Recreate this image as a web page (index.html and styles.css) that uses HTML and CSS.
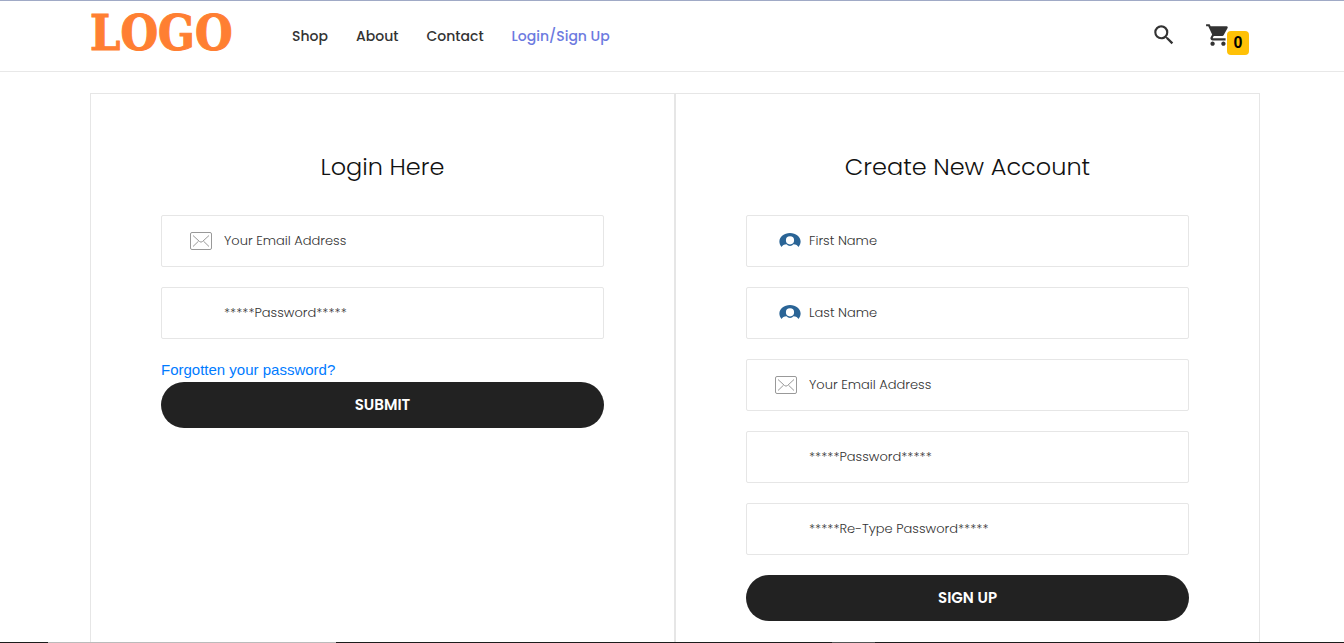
FILE: index.html
```html
<!DOCTYPE html>
<html lang="en">
<head>
<meta charset="utf-8">
<meta name="viewport" content="width=device-width, initial-scale=1">
<title>Login / Sign Up</title>
<link rel="stylesheet" href="styles.css">
</head>
<body>
<svg class="sprite" aria-hidden="true">
  <symbol id="mail" viewBox="0 0 22 18">
    <rect x="0.5" y="0.5" width="21" height="17" rx="1.5" fill="none" stroke="#999"/>
    <path d="M3 3.500l6.500 6q1.500 1.300 3 0l6.500-6M3 14.500l5.500-5.300M19 14.500l-5.500-5.300" fill="none" stroke="#999"/>
  </symbol>
  <symbol id="user" viewBox="0 0 22 16">
    <path fill-rule="evenodd" fill="#2a6496" d="M2.500 15C-3 8 3 1 11 1s14 7 8.500 14c-.8-1.600-2.600-2.500-5-2.700a4.500 4.500 0 0 1-7 0c-2.400.2-4.200 1.100-5 2.700zM11 4.200a4.100 4.100 0 1 0 0 8.200 4.100 4.100 0 0 0 0-8.200z"/>
  </symbol>
</svg>
<header class="header">
  <a class="logo" href="#">LOGO</a>
  <nav class="nav">
    <a href="#">Shop</a>
    <a href="#">About</a>
    <a href="#">Contact</a>
    <a class="active" href="#">Login/Sign Up</a>
  </nav>
  <div class="tools">
    <button class="tool" type="button" aria-label="Search">
      <svg width="26" height="26" viewBox="0 0 24 24"><path fill="#333" d="M15.500 14h-.79l-.28-.27A6.470 6.470 0 0 0 16 9.500 6.500 6.500 0 1 0 9.500 16c1.610 0 3.090-.59 4.230-1.570l.27.28v.79l5 4.990L20.490 19l-4.990-5zm-6 0C7.010 14 5 11.990 5 9.500S7.010 5 9.500 5 14 7.010 14 9.500 11.990 14 9.500 14z"/></svg>
    </button>
    <button class="tool" type="button" aria-label="Cart">
      <svg width="26" height="26" viewBox="0 0 24 24"><path fill="#333" d="M7 18c-1.100 0-1.990.9-1.990 2S5.900 22 7 22s2-.9 2-2-.9-2-2-2zM1 2v2h2l3.600 7.590-1.350 2.450c-.16.28-.25.61-.25.960 0 1.100.9 2 2 2h12v-2H7.420c-.14 0-.25-.11-.25-.25l.03-.12.9-1.630h7.450c.75 0 1.410-.41 1.750-1.030l3.580-6.490A1 1 0 0 0 20 4H5.210l-.94-2H1zm16 16c-1.100 0-1.990.9-1.990 2s.89 2 1.990 2 2-.9 2-2-.9-2-2-2z"/></svg>
      <span class="badge">0</span>
    </button>
  </div>
</header>
<main class="panels">
  <form class="panel">
    <h1 class="title">Login Here</h1>
    <div class="field"><svg class="icon"><use href="#mail"/></svg><input type="email" aria-label="Email" placeholder="Your Email Address"></div>
    <div class="field"><input type="password" aria-label="Password" placeholder="*****Password*****"></div>
    <a class="forgot" href="#">Forgotten your password?</a>
    <button class="submit" type="submit">SUBMIT</button>
  </form>
  <form class="panel">
    <h2 class="title">Create New Account</h2>
    <div class="field"><svg class="icon user"><use href="#user"/></svg><input type="text" aria-label="First name" placeholder="First Name"></div>
    <div class="field"><svg class="icon user"><use href="#user"/></svg><input type="text" aria-label="Last name" placeholder="Last Name"></div>
    <div class="field"><svg class="icon"><use href="#mail"/></svg><input type="email" aria-label="Email" placeholder="Your Email Address"></div>
    <div class="field"><input type="password" aria-label="Password" placeholder="*****Password*****"></div>
    <div class="field"><input type="password" aria-label="Re-type password" placeholder="*****Re-Type Password*****"></div>
    <button class="submit" type="submit">SIGN UP</button>
  </form>
</main>
<div class="edge"></div>
</body>
</html>
```
FILE: styles.css
```css
* { box-sizing: border-box; }
body {
  margin: 0;
  min-height: 100vh;
  display: flex;
  flex-direction: column;
  background: #fff;
  color: #111;
  font-family: Poppins, Inter, sans-serif;
}
a { text-decoration: none; }
.sprite { display: none; }
.header {
  display: flex;
  align-items: center;
  height: 72px;
  padding: 0 84px 0 90px;
  border-top: 1px solid #a0aac6;
  border-bottom: 1px solid #e8e8e8;
}
.logo {
  width: 202px;
  padding-bottom: 6px;
  color: #ff7f32;
  font: bold 48px/60px "DejaVu Serif Condensed", "DejaVu Serif", serif;
  -webkit-text-stroke: 1px #ff7f32;
}
.nav { display: flex; gap: 28px; }
.nav a { color: #333; font-size: 14px; font-weight: 500; line-height: 20px; }
.nav .active { color: #6c7ae0; }
.tools { display: flex; gap: 28px; margin-left: auto; padding: 0 29px 2px 0; }
.tool {
  position: relative;
  width: 26px;
  height: 26px;
  padding: 0;
  border: 0;
  background: none;
}
.tool svg { display: block; }
.badge {
  position: absolute;
  left: 22px;
  top: 9px;
  width: 22px;
  border-radius: 4px;
  background: #ffc107;
  color: #000;
  font: bold 16px/24px "Liberation Sans", Arial, sans-serif;
}
.panels {
  flex: 1;
  display: grid;
  grid-template-columns: 1fr 1fr;
  margin-top: 21px;
  padding: 0 84px 0 90px;
}
.panel {
  display: flex;
  flex-direction: column;
  padding: 55px 70px 20px;
  border: 1px solid #e6e6e6;
  border-bottom: 0;
}
.title {
  margin: 0 0 30px;
  font-size: 24px;
  font-weight: 300;
  line-height: 36px;
  text-align: center;
}
.field { position: relative; margin-bottom: 20px; }
.field input {
  display: block;
  width: 100%;
  height: 52px;
  padding: 0 28px 0 62px;
  border: 1px solid #e6e6e6;
  border-radius: 2px;
  background: none;
  color: #333;
  font: 300 13px/20px Poppins, Inter, sans-serif;
}
.field input::placeholder { color: #333; opacity: 1; }
.icon { position: absolute; left: 29px; top: 17px; width: 22px; height: 18px; }
.icon.user { left: 33px; height: 16px; }
.forgot {
  padding-bottom: 2px;
  color: #007bff;
  font: 15px/21px "Liberation Sans", Arial, sans-serif;
}
.submit {
  height: 46px;
  border: 0;
  border-radius: 23px;
  background: #222;
  color: #fff;
  font: 600 15px/22px Poppins, Inter, sans-serif;
}
.edge {
  position: fixed;
  left: 0;
  right: 0;
  bottom: 0;
  height: 1px;
  background: linear-gradient(to right, #1c1c1c 48px, #bbb 48px 336px, #1c1c1c 336px 832px, #555 832px 875px, #1c1c1c 875px);
}
```
